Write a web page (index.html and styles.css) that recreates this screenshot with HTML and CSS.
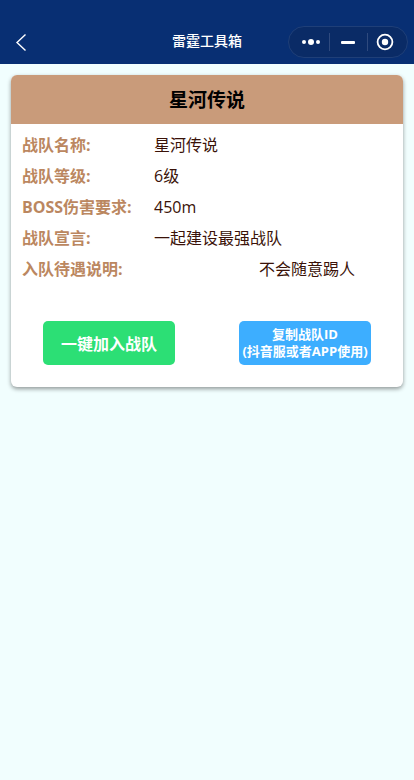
FILE: index.html
```html
<!DOCTYPE html>
<html lang="zh-CN">
<head>
<meta charset="utf-8">
<title>雷霆工具箱</title>
<link rel="stylesheet" href="styles.css">
</head>
<body>
<header class="nav">
  <svg class="back" width="12" height="20" viewBox="0 0 12 20"><path d="M10.5 2.5 L2 10.5 L10.5 18.5" fill="none" stroke="#fff" stroke-width="1.4"/></svg>
  <div class="nav-title">雷霆工具箱</div>
  <div class="capsule">
    <svg class="dots" width="18" height="8" viewBox="0 0 18 8"><circle cx="2" cy="4" r="2" fill="#fff"/><circle cx="9" cy="4" r="3" fill="#fff"/><circle cx="16" cy="4" r="2" fill="#fff"/></svg>
    <span class="sep"></span>
    <span class="minus"></span>
    <span class="sep"></span>
    <svg class="record" width="18" height="18" viewBox="0 0 18 18"><circle cx="9" cy="9" r="7.4" fill="none" stroke="#fff" stroke-width="1.8"/><circle cx="9" cy="9" r="3.2" fill="#fff"/></svg>
  </div>
</header>
<main class="card">
  <h1 class="card-title">星河传说</h1>
  <div class="rows">
    <div class="row"><span class="label">战队名称:</span><span class="value">星河传说</span></div>
    <div class="row"><span class="label">战队等级:</span><span class="value">6级</span></div>
    <div class="row"><span class="label">BOSS伤害要求:</span><span class="value">450m</span></div>
    <div class="row"><span class="label">战队宣言:</span><span class="value">一起建设最强战队</span></div>
    <div class="row"><span class="label">入队待遇说明:</span><span class="value value-far">不会随意踢人</span></div>
  </div>
  <div class="actions">
    <button class="btn btn-green">一键加入战队</button>
    <button class="btn btn-blue">复制战队ID<br>(抖音服或者APP使用)</button>
  </div>
</main>
</body>
</html>
```
FILE: styles.css
```css
* { box-sizing: border-box; }
html, body { margin: 0; height: 100%; }
body {
  background: #f1fefe;
  font-family: "Open Sans", "Noto Sans CJK SC", sans-serif;
  overflow: hidden;
}
.nav {
  height: 64px;
  background: #082f73;
  display: flex;
  align-items: flex-end;
  position: relative;
}
.back { position: absolute; left: 15px; top: 32px; }
.nav-title {
  width: 100%;
  text-align: center;
  color: #fff;
  font-size: 14px;
  font-weight: 500;
  line-height: 20px;
  padding-bottom: 13px;
}
.capsule {
  position: absolute;
  left: 288px;
  top: 26px;
  width: 120px;
  height: 32px;
  border-radius: 16px;
  border: 1px solid #1f3f78;
  background: #0a2b66;
  display: flex;
  align-items: center;
  padding-left: 13px;
}
.sep { width: 1px; height: 18px; background: #2f4a7e; }
.dots { margin-right: 9px; }
.minus { width: 14px; height: 3px; background: #fff; border-radius: 1px; margin: 0 12px 0 11px; }
.record { margin-left: 8px; }
.card {
  margin: 11px 11px 0;
  height: 312px;
  background: #fff;
  border-radius: 6px;
  overflow: hidden;
  box-shadow: 0 2px 4px rgba(0, 0, 0, .4);
}
.card-title {
  margin: 0;
  height: 49px;
  line-height: 50px;
  background: #c99b7a;
  color: #000;
  text-align: center;
  font-size: 19px;
  font-weight: 700;
}
.rows { padding: 6px 11px 0; }
.row {
  display: flex;
  height: 31px;
  line-height: 31px;
  font-size: 16px;
  white-space: nowrap;
}
.label {
  width: 132px;
  flex: none;
  color: #bb8760;
  font-weight: 700;
}
.value { color: #3a1208; }
.value-far { margin-left: 105px; }
.actions {
  display: flex;
  justify-content: space-between;
  padding: 0 32px;
  margin-top: 36px;
}
.btn {
  width: 132px;
  height: 44px;
  border: 0;
  border-radius: 5px;
  padding: 0;
  color: #fff;
  font-family: inherit;
  font-weight: 700;
}
.btn-green { background: #2cdf75; font-size: 16px; }
.btn-blue { background: #3daeff; font-size: 13px; line-height: 17px; }
```
